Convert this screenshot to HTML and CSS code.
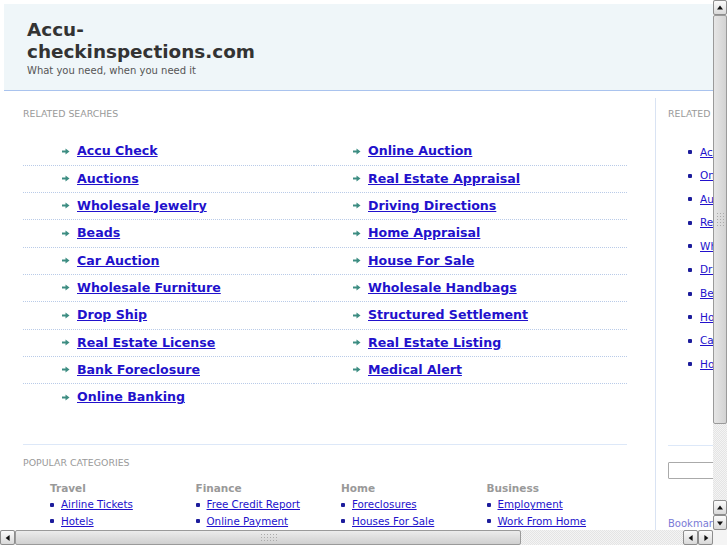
FILE: index.html
```html
<!DOCTYPE html>
<html lang="en">
<head>
    <meta charset="UTF-8">
    <title>Accu-checkinspections.com</title>
    <link rel="stylesheet" href="styles.css">
</head>
<body>

<div class="window">
    <div class="viewport">
        <div class="page">

            <!-- Banner -->
            <div class="banner">
                <h1 class="site-title">Accu-checkinspections.com</h1>
                <p class="tagline">What you need, when you need it</p>
            </div>

            <div class="main">
                <div class="content">
                    <h2 class="label">Related Searches</h2>

                    <div class="searches">
                        <ul class="search-col">
                            <li><a href="#">Accu Check</a></li>
                            <li><a href="#">Auctions</a></li>
                            <li><a href="#">Wholesale Jewelry</a></li>
                            <li><a href="#">Beads</a></li>
                            <li><a href="#">Car Auction</a></li>
                            <li><a href="#">Wholesale Furniture</a></li>
                            <li><a href="#">Drop Ship</a></li>
                            <li><a href="#">Real Estate License</a></li>
                            <li><a href="#">Bank Foreclosure</a></li>
                            <li class="last"><a href="#">Online Banking</a></li>
                        </ul>
                        <ul class="search-col">
                            <li><a href="#">Online Auction</a></li>
                            <li><a href="#">Real Estate Appraisal</a></li>
                            <li><a href="#">Driving Directions</a></li>
                            <li><a href="#">Home Appraisal</a></li>
                            <li><a href="#">House For Sale</a></li>
                            <li><a href="#">Wholesale Handbags</a></li>
                            <li><a href="#">Structured Settlement</a></li>
                            <li><a href="#">Real Estate Listing</a></li>
                            <li><a href="#">Medical Alert</a></li>
                        </ul>
                    </div>

                    <!-- Popular Categories -->
                    <div class="popular">
                        <h2 class="label">Popular Categories</h2>
                        <div class="cats">
                            <div class="cat">
                                <h3>Travel</h3>
                                <ul>
                                    <li><a href="#">Airline Tickets</a></li>
                                    <li><a href="#">Hotels</a></li>
                                </ul>
                            </div>
                            <div class="cat">
                                <h3>Finance</h3>
                                <ul>
                                    <li><a href="#">Free Credit Report</a></li>
                                    <li><a href="#">Online Payment</a></li>
                                </ul>
                            </div>
                            <div class="cat">
                                <h3>Home</h3>
                                <ul>
                                    <li><a href="#">Foreclosures</a></li>
                                    <li><a href="#">Houses For Sale</a></li>
                                </ul>
                            </div>
                            <div class="cat">
                                <h3>Business</h3>
                                <ul>
                                    <li><a href="#">Employment</a></li>
                                    <li><a href="#">Work From Home</a></li>
                                </ul>
                            </div>
                        </div>
                    </div>
                </div>

                <!-- Sidebar -->
                <div class="sidebar">
                    <h2 class="label">Related Searches</h2>
                    <ul class="side-links">
                        <li><a href="#">Accu Check</a></li>
                        <li><a href="#">Online Auction</a></li>
                        <li><a href="#">Auctions</a></li>
                        <li><a href="#">Real Estate Appraisal</a></li>
                        <li><a href="#">Wholesale Jewelry</a></li>
                        <li><a href="#">Driving Directions</a></li>
                        <li><a href="#">Beads</a></li>
                        <li><a href="#">Home Appraisal</a></li>
                        <li><a href="#">Car Auction</a></li>
                        <li><a href="#">House For Sale</a></li>
                    </ul>
                    <div class="side-search">
                        <input type="text" class="search-box">
                    </div>
                    <a href="#" class="bookmark">Bookmark this page</a>
                </div>
            </div>

        </div>
    </div>

    <!-- Scrollbars -->
    <div class="vscroll">
        <div class="sb-btn up"></div>
        <div class="sb-thumb v"><span class="grip"></span></div>
        <div class="sb-track"></div>
        <div class="sb-btn up"></div>
        <div class="sb-btn down"></div>
    </div>
    <div class="hscroll">
        <div class="sb-btn left"></div>
        <div class="sb-thumb h"><span class="grip"></span></div>
        <div class="sb-track"></div>
        <div class="sb-btn left"></div>
        <div class="sb-btn right"></div>
    </div>
    <div class="corner"></div>
</div>

</body>
</html>
```

FILE: styles.css
```css
body {
    margin: 0;
    padding: 0;
    font-family: 'DejaVu Sans', Verdana, sans-serif;
    background: #fff;
    color: #333;
}
ul {
    list-style: none;
    margin: 0;
    padding: 0;
}
.window {
    width: 727px;
    height: 545px;
    display: grid;
    grid-template-columns: 713px 14px;
    grid-template-rows: 530px 15px;
    overflow: hidden;
}
.viewport {
    overflow: hidden;
}
.page {
    width: 860px;
    padding: 4px 0 0 4px;
}

/* Banner */
.banner {
    background: #eff6f9;
    border-bottom: 1px solid #a9c3ee;
    height: 87px;
    padding-left: 23px;
    box-sizing: border-box;
    padding-top: 14.5px;
}
.site-title {
    width: 240px;
    margin: 0;
    font-size: 18.4px;
    line-height: 22px;
    font-weight: bold;
    color: #333;
}
.tagline {
    margin: 2px 0 0;
    font-size: 10px;
    line-height: 12px;
    color: #555;
}

.main {
    display: flex;
}
.label {
    margin: 0;
    font-size: 9.4px;
    line-height: 12px;
    font-weight: normal;
    text-transform: uppercase;
    color: #999;
}

/* Content column */
.content {
    width: 632px;
    margin-top: 7px;
    padding: 9.5px 0 0 19px;
    border-right: 1px solid #d9e3f3;
    min-height: 440px;
}
.searches {
    display: grid;
    grid-template-columns: 291px 313px;
    width: 604px;
    margin-top: 19px;
}
.search-col li {
    padding: 5.83px 0 6.5px 39px;
    line-height: 14px;
    border-bottom: 1px dotted #b9cbe8;
    display: flex;
    align-items: center;
}
.search-col li.last {
    border-bottom-color: transparent;
}
.search-col li::before {
    content: "";
    width: 8px;
    height: 7px;
    margin-right: 7px;
    background: url("data:image/svg+xml,%3Csvg xmlns='http://www.w3.org/2000/svg' width='8' height='7'%3E%3Cpath d='M0 3.5h4' stroke='%233d8d82' stroke-width='2'/%3E%3Cpath d='M3.5 0.5L7.5 3.5L3.5 6.5z' fill='%233d8d82'/%3E%3C/svg%3E") no-repeat;
}
.search-col a {
    font-size: 12.6px;
    font-weight: bold;
    color: #2211cc;
}

.popular {
    margin-top: 32px;
    width: 604px;
    border-top: 1px solid #dde8f8;
    padding-top: 12px;
}
.cats {
    display: grid;
    grid-template-columns: repeat(4, 145.5px);
    padding-left: 27px;
    margin-top: 13.5px;
}
.cat h3 {
    margin: 0 0 1px;
    font-size: 10.5px;
    line-height: 13px;
    color: #999;
}
.cat li {
    display: flex;
    align-items: center;
    line-height: 16.5px;
}
.cat li::before, .side-links li::before {
    content: "";
    width: 4px;
    height: 4px;
    border-radius: 1px;
    background: #1d1d9c;
    margin-right: 7px;
}
.cat a {
    font-size: 10.3px;
    color: #2211cc;
}

/* Sidebar */
.sidebar {
    padding: 16.5px 0 0 12px;
    width: 180px;
}
.side-links {
    margin-top: 26px;
    padding-left: 20px;
}
.side-links li {
    display: flex;
    align-items: center;
    line-height: 13px;
    padding-bottom: 10.6px;
}
.side-links li::before {
    margin-right: 8px;
}
.side-links a {
    font-size: 10.5px;
    color: #2211cc;
}
.side-search {
    margin-top: 64px;
    border-top: 1px solid #dde8f8;
    padding-top: 16px;
}
.search-box {
    display: block;
    margin: 0;
    width: 150px;
    height: 17px;
    box-sizing: border-box;
    border: 1px solid #aaa;
    border-radius: 1px;
}
.bookmark {
    display: block;
    margin-top: 39px;
    font-size: 10px;
    color: #7a7ad6;
    text-decoration: none;
    white-space: nowrap;
}

/* Scrollbars */
.vscroll, .hscroll {
    display: flex;
    background: repeating-conic-gradient(#f4f4f4 0 25%, #e4e4e4 0 50%) 0 0 / 2px 2px;
}
.vscroll {
    flex-direction: column;
}
.sb-btn {
    width: 14px;
    height: 15px;
    box-sizing: border-box;
    border: 1px solid #8d8d8d;
    border-radius: 2px;
    background: linear-gradient(#fbfbfb, #d9d9d9);
    position: relative;
    flex: none;
}
.hscroll .sb-btn {
    width: 15px;
    height: 15px;
}
.sb-btn::after {
    content: "";
    position: absolute;
    left: 50%;
    top: 50%;
    width: 0;
    height: 0;
    border: 3px solid transparent;
}
.sb-btn.up::after {
    border-bottom: 4px solid #111;
    border-top-width: 0;
    transform: translate(-50%, -60%);
}
.sb-btn.down::after {
    border-top: 4px solid #111;
    border-bottom-width: 0;
    transform: translate(-50%, -40%);
}
.sb-btn.left::after {
    border-right: 4px solid #111;
    border-left-width: 0;
    transform: translate(-60%, -50%);
}
.sb-btn.right::after {
    border-left: 4px solid #111;
    border-right-width: 0;
    transform: translate(-40%, -50%);
}
.sb-thumb {
    box-sizing: border-box;
    border: 1px solid #9a9a9a;
    border-radius: 2px;
    display: flex;
    align-items: center;
    justify-content: center;
    flex: none;
}
.sb-thumb.v {
    height: 409px;
    background: linear-gradient(90deg, #e6e6e6, #d2d2d2);
}
.sb-thumb.h {
    width: 506px;
    background: linear-gradient(#ececec, #d0d0d0);
}
.sb-track {
    flex: 1;
}
.grip {
    background: radial-gradient(circle, #aaa 0.6px, transparent 0.7px) 0 0 / 3px 3px;
}
.sb-thumb.v .grip {
    width: 9px;
    height: 15px;
}
.sb-thumb.h .grip {
    width: 17px;
    height: 9px;
}
.corner {
    background: #f4f4f4;
}
```
